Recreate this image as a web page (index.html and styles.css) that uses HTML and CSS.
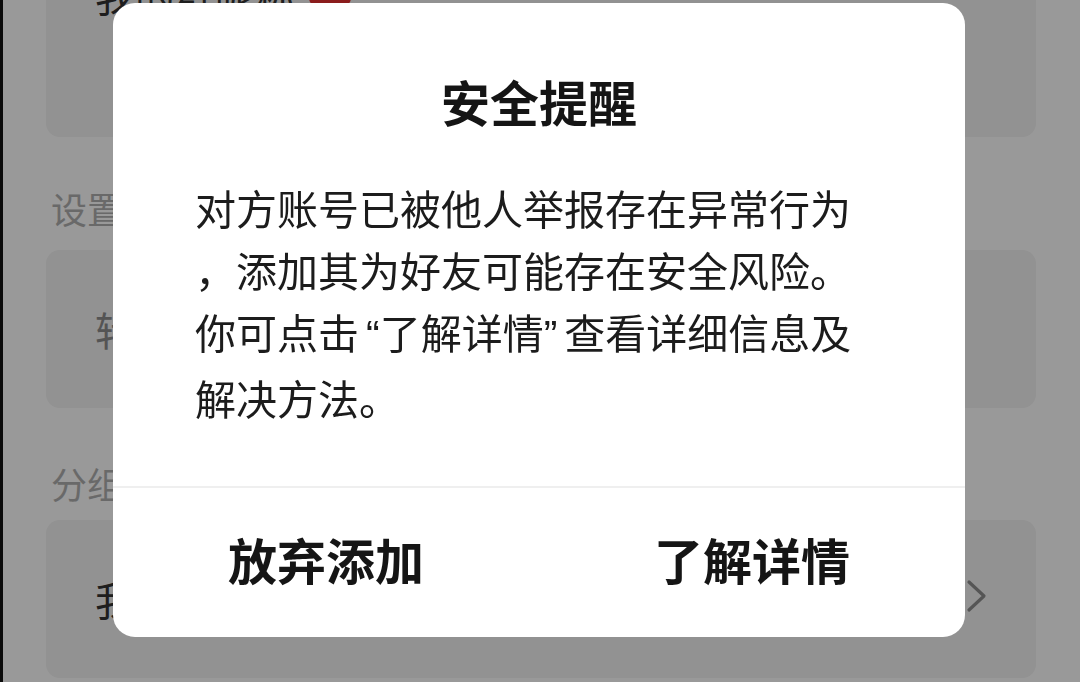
FILE: index.html
```html
<!DOCTYPE html>
<html lang="zh-CN">
<head>
  <meta charset="UTF-8">
  <title>安全提醒</title>
  <meta name="viewport" content="width=device-width, initial-scale=1.0">
  <link rel="stylesheet" href="styles.css">
</head>
<body>

  <!-- group settings page behind the dialog -->
  <div class="page">
    <div class="card card-top">
      <div class="row-top">
        <span class="row-text">我的群昵称</span>
        <span class="badge"></span>
      </div>
    </div>

    <div class="label label-settings">设置</div>
    <div class="card">
      <div class="row">
        <span class="row-text muted">转让群主</span>
      </div>
    </div>

    <div class="label label-group">分组</div>
    <div class="card">
      <div class="row">
        <span class="row-text">我的好友</span>
        <svg class="chevron" width="22" height="34" viewBox="0 0 22 34">
          <polyline points="3,3 18,17 3,31" fill="none" stroke="#8e8e8e" stroke-width="3.2" stroke-linecap="round" stroke-linejoin="round"/>
        </svg>
      </div>
    </div>
  </div>

  <div class="mask"></div>

  <!-- warning dialog -->
  <div class="dialog">
    <div class="dialog-title">安全提醒</div>
    <div class="dialog-body">
      对方账号已被他人举报存在异常行为<br>
      ，添加其为好友可能存在安全风险。<br>
      你可点击<span class="q q-open">“</span>了解详情<span class="q q-close">”</span>查看详细信息及<br>
      解决方法。
    </div>
    <div class="dialog-footer">
      <button class="dialog-btn">放弃添加</button>
      <button class="dialog-btn">了解详情</button>
    </div>
  </div>

</body>
</html>
```

FILE: styles.css
```css
/* Reset */
* {
  margin: 0;
  padding: 0;
  box-sizing: border-box;
}

html, body {
  width: 1080px;
  height: 682px;
  overflow: hidden;
}

body {
  background: #ffffff;
  font-family: "Noto Sans CJK SC", "Noto Sans", sans-serif;
  color: #111;
  border-left: 3px solid #111;
}

/* page behind */
.page {
  padding: 0 44px 0 43px;
}

.card {
  background: #f3f3f3;
  border-radius: 14px;
  height: 158px;
}

.card-top {
  margin-top: -70px;
  height: 207px;
  padding-top: 45px;
}

.row-top {
  display: flex;
  align-items: center;
  padding-left: 49px;
  height: 40px;
}

.row {
  display: flex;
  align-items: center;
  justify-content: space-between;
  height: 100%;
  padding: 0 48px 0 49px;
}

.row-text {
  font-size: 40px;
  line-height: 40px;
  color: #333;
}

.row-text.muted {
  color: #8d8d8d;
}

.badge {
  display: inline-block;
  width: 42px;
  height: 44px;
  margin-left: 14px;
  margin-top: -22px;
  background: #e8302f;
  border-radius: 8px;
}

.label {
  font-size: 36px;
  line-height: 50px;
  color: #b0b0b0;
  padding-left: 5px;
}

.label-settings {
  margin-top: 46px;
  margin-bottom: 17px;
}

.label-group {
  margin-top: 50px;
  margin-bottom: 12px;
}

.chevron {
  display: block;
  margin-top: -6px;
}

/* overlay */
.mask {
  position: fixed;
  inset: 0;
  background: rgba(0, 0, 0, 0.4);
}

.dialog {
  position: absolute;
  left: 113px;
  top: 3px;
  width: 852px;
  height: 634px;
  background: #fff;
  border-radius: 22px;
  display: flex;
  flex-direction: column;
  overflow: hidden;
}

.dialog-title {
  margin-top: 70px;
  height: 56px;
  line-height: 56px;
  text-align: center;
  font-size: 49px;
  font-weight: 700;
  color: #151515;
}

.dialog-body {
  margin-top: 47px;
  padding: 0 30px 0 82px;
  font-size: 41px;
  line-height: 62px;
  color: #1c1c1c;
  height: 310px;
}

/* narrow latin quotes inside the CJK line */
.q {
  font-family: "Liberation Sans", sans-serif;
}

.q-open {
  padding-left: 7px;
}

.q-close {
  padding-right: 7px;
}

.dialog-footer {
  flex: 1;
  display: flex;
  border-top: 2px solid #efefef;
}

.dialog-btn {
  flex: 1;
  background: none;
  border: none;
  font-family: inherit;
  font-size: 49px;
  font-weight: 700;
  color: #151515;
  padding-bottom: 8px;
}
```
